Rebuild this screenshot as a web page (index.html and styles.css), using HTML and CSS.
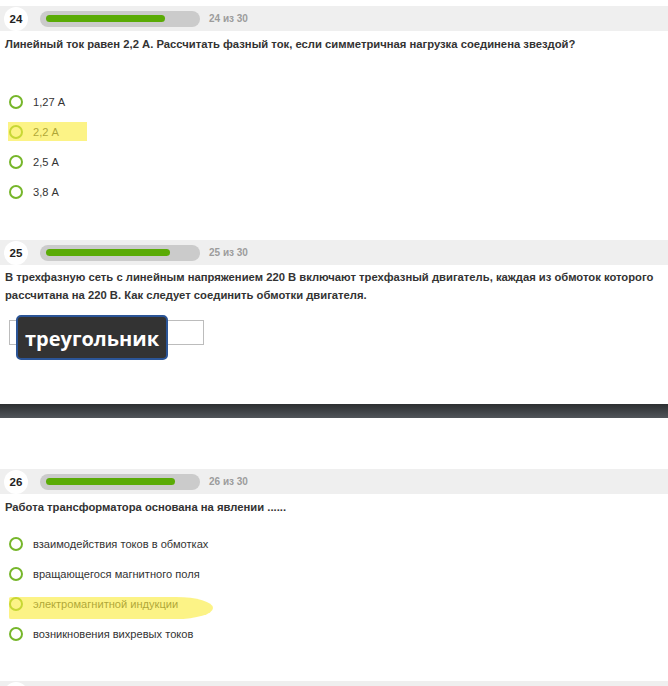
FILE: index.html
```html
<!DOCTYPE html>
<html lang="ru">
<head>
<meta charset="utf-8">
<link rel="stylesheet" href="styles.css">
</head>
<body>
<section class="q q-first">
  <div class="qhead">
    <span class="num">24</span>
    <div class="track"><div class="fill" style="width:119px"></div></div>
    <span class="count">24 из 30</span>
  </div>
  <div class="qtext">Линейный ток равен 2,2 А. Рассчитать фазный ток, если симметричная нагрузка соединена звездой?</div>
  <ul class="opts">
    <li><span class="radio"></span>1,27 А</li>
    <li><span class="radio"></span>2,2 А<span class="mark mark-short"></span></li>
    <li><span class="radio"></span>2,5 А</li>
    <li><span class="radio"></span>3,8 А</li>
  </ul>
</section>

<section class="q q-second">
  <div class="qhead">
    <span class="num">25</span>
    <div class="track"><div class="fill" style="width:124px"></div></div>
    <span class="count">25 из 30</span>
  </div>
  <div class="qtext">В трехфазную сеть с линейным напряжением 220 В включают трехфазный двигатель, каждая из обмоток которого рассчитана на 220 В. Как следует соединить обмотки двигателя.</div>
  <div class="answer">
    <div class="input"></div>
    <div class="tip">треугольник</div>
  </div>
</section>

<div class="band"></div>

<section class="q q-third">
  <div class="qhead">
    <span class="num">26</span>
    <div class="track"><div class="fill" style="width:129px"></div></div>
    <span class="count">26 из 30</span>
  </div>
  <div class="qtext">Работа трансформатора основана на явлении ......</div>
  <ul class="opts opts-tight">
    <li><span class="radio"></span>взаимодействия токов в обмотках</li>
    <li><span class="radio"></span>вращающегося магнитного поля</li>
    <li><span class="radio"></span>электромагнитной индукции<span class="mark mark-long"></span></li>
    <li><span class="radio"></span>возникновения вихревых токов</li>
  </ul>
</section>

<section class="q q-fourth">
  <div class="qhead">
    <span class="num"></span>
    <div class="track"><div class="fill" style="width:134px"></div></div>
  </div>
</section>
</body>
</html>
```

FILE: styles.css
```css
* { box-sizing: border-box; }
html, body { margin: 0; padding: 0; background: #fff; }
body {
  width: 668px;
  height: 686px;
  overflow: hidden;
  font-family: "Liberation Sans", Arial, sans-serif;
  color: #333;
}

.q-first { margin-top: 6px; }
.q-second { margin-top: 33px; }
.q-third { margin-top: 51px; }
.q-fourth { margin-top: 32px; }

.qhead {
  height: 25px;
  background: #efefef;
  display: flex;
  align-items: center;
}
.num {
  width: 24px;
  height: 24px;
  margin-left: 4px;
  border-radius: 50%;
  background: #fff;
  display: flex;
  align-items: center;
  justify-content: center;
  font-weight: bold;
  font-size: 11.5px;
  color: #222;
}
.track {
  margin-left: 12px;
  width: 160px;
  height: 16px;
  border-radius: 8px;
  background: #cbcbcb;
  padding: 4px 6px;
  display: flex;
  align-items: center;
}
.fill {
  height: 7px;
  border-radius: 4px;
  background: #5aab06;
}
.count {
  margin-left: 9px;
  font-weight: bold;
  font-size: 10px;
  color: #9c9c9c;
}

.qtext {
  margin-top: 4px;
  padding-left: 5px;
  padding-right: 8px;
  font-weight: bold;
  font-size: 11.25px;
  line-height: 18px;
  color: #333;
}
.q-second .qtext { margin-top: 3px; }

.opts {
  list-style: none;
  margin: 34px 0 0;
  padding: 0;
}
.opts-tight { margin-top: 13px; }
.opts li {
  position: relative;
  height: 30px;
  display: flex;
  align-items: center;
  font-size: 11.1px;
  color: #333;
}
.radio {
  width: 14px;
  height: 14px;
  margin-left: 9px;
  margin-right: 10px;
  border-radius: 50%;
  border: 2px solid #76b62a;
  background: #fff;
}

.mark {
  position: absolute;
  background: rgba(250, 236, 60, 0.62);
}
.mark-short {
  left: 8px;
  top: 5px;
  width: 79px;
  height: 19px;
}
.mark-long {
  left: 9px;
  top: 8px;
  width: 204px;
  height: 22px;
  border-radius: 2px 40px 40px 2px / 2px 12px 12px 2px;
}

.answer {
  position: relative;
  margin-top: 16px;
  margin-left: 9px;
  width: 195px;
  height: 25px;
}
.input {
  width: 195px;
  height: 25px;
  border: 1px solid #bcbcbc;
  background: #fff;
}
.tip {
  position: absolute;
  left: 7px;
  top: -5px;
  width: 152px;
  height: 45px;
  border: 2px solid #2b5597;
  border-radius: 5px;
  background: #333;
  color: #fff;
  font-family: "Open Sans", "Noto Sans", sans-serif;
  font-weight: bold;
  font-size: 20px;
  display: flex;
  align-items: center;
  justify-content: center;
  padding-top: 2px;
}

.band {
  margin-top: 59px;
  height: 14px;
  background: linear-gradient(#2c2f31, #51555a);
}
```
